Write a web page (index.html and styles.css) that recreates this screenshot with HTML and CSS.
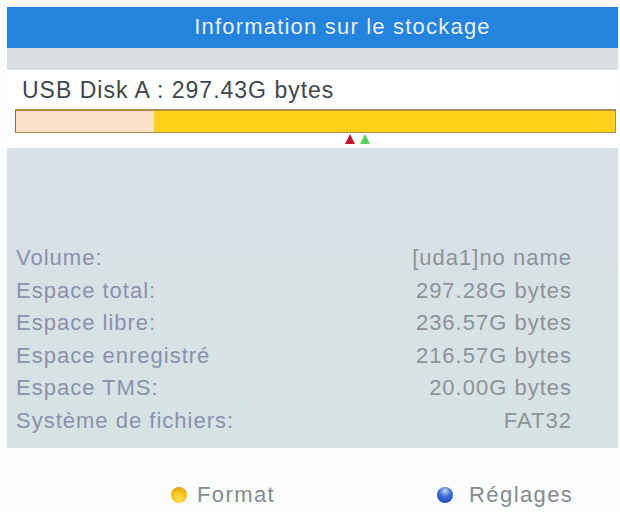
FILE: index.html
```html
<!DOCTYPE html>
<html lang="fr">
<head>
    <meta charset="UTF-8">
    <title>Information sur le stockage</title>
    <link rel="stylesheet" href="styles.css">
</head>
<body>

    <div class="screen">
        <div class="title">
            <p>Information sur le stockage</p>
        </div>
        <div class="band"></div>

        <div class="disk">
            <p class="disk_name">USB Disk A : 297.43G bytes</p>
            <div class="bar">
                <div class="bar_used"></div>
                <div class="bar_free"></div>
                <span class="marker marker_red"></span>
                <span class="marker marker_green"></span>
            </div>
        </div>

        <div class="info">
            <div class="row"><span class="label">Volume:</span><span class="value">[uda1]no name</span></div>
            <div class="row"><span class="label">Espace total:</span><span class="value">297.28G bytes</span></div>
            <div class="row"><span class="label">Espace libre:</span><span class="value">236.57G bytes</span></div>
            <div class="row"><span class="label">Espace enregistré</span><span class="value">216.57G bytes</span></div>
            <div class="row"><span class="label">Espace TMS:</span><span class="value">20.00G bytes</span></div>
            <div class="row"><span class="label">Système de fichiers:</span><span class="value">FAT32</span></div>
        </div>

        <div class="footer">
            <div class="key key_format"><span class="ball ball_yellow"></span>Format</div>
            <div class="key key_settings"><span class="ball ball_blue"></span>Réglages</div>
        </div>
    </div>

</body>
</html>
```

FILE: styles.css
```css
*,*::after,*::before{
    box-sizing: border-box;
    margin: 0;
    padding: 0;
}

body{
    background-color: #fbfcfc;
    font-family: "Liberation Sans", Arial, sans-serif;
    padding: 7px 0 0 7px;
}

.screen{
    width: 611px;
}

.title{
    height: 41px;
    background-color: #2483dc;
    color: #e6eef8;
    font-size: 22px;
    letter-spacing: 1.2px;
    text-align: center;
    padding-left: 60px;
    padding-top: 7px;
    line-height: 26px;
}

.band{
    height: 22px;
    background-color: #d9dee3;
}

.disk{
    height: 78px;
    background-color: #ffffff;
    padding: 7px 2px 0 8px;
}

.disk_name{
    font-size: 23px;
    line-height: 26px;
    letter-spacing: 1px;
    color: #3f4650;
    padding-left: 7px;
}

.bar{
    position: relative;
    display: flex;
    height: 24px;
    margin-top: 6px;
    border: 1px solid #b58a4c;
    border-top-width: 2px;
    border-left-color: #c0504e;
}

.bar_used{
    width: 138px;
    background-color: #fde2c9;
}

.bar_free{
    flex: 1;
    background-color: #fdd218;
}

.marker{
    position: absolute;
    top: 23px;
    width: 0;
    height: 0;
    border-left: 5.5px solid transparent;
    border-right: 5.5px solid transparent;
    border-bottom: 10px solid;
}

.marker_red{
    left: 329px;
    border-bottom-color: #c4142e;
}

.marker_green{
    left: 344px;
    border-bottom-color: #5ad35a;
}

.info{
    height: 300px;
    background: linear-gradient(#d9e1e7, #d6e3e3);
    padding: 94px 46px 0 9px;
    font-size: 22px;
    line-height: 32.5px;
    letter-spacing: 1px;
}

.row{
    display: flex;
    justify-content: space-between;
}

.label{
    color: #8a91ad;
}

.value{
    color: #8d9299;
}

.footer{
    display: flex;
    padding-top: 35px;
    font-size: 22px;
    line-height: 24px;
    letter-spacing: 1.4px;
    color: #878b91;
}

.key{
    display: flex;
    align-items: center;
}

.key_format{
    margin-left: 164px;
}

.key_settings{
    margin-left: 162px;
}

.ball{
    display: inline-block;
    width: 16px;
    height: 16px;
    border-radius: 50%;
    margin-right: 10px;
}

.ball_yellow{
    background: radial-gradient(circle at 50% 75%, #fbe05a 0%, #f2bd12 55%, #c9900a 100%);
}

.ball_blue{
    background: radial-gradient(circle at 50% 25%, #c7d8f5 0%, #3d6fd6 40%, #173c9e 100%);
    margin-right: 16px;
}
```
